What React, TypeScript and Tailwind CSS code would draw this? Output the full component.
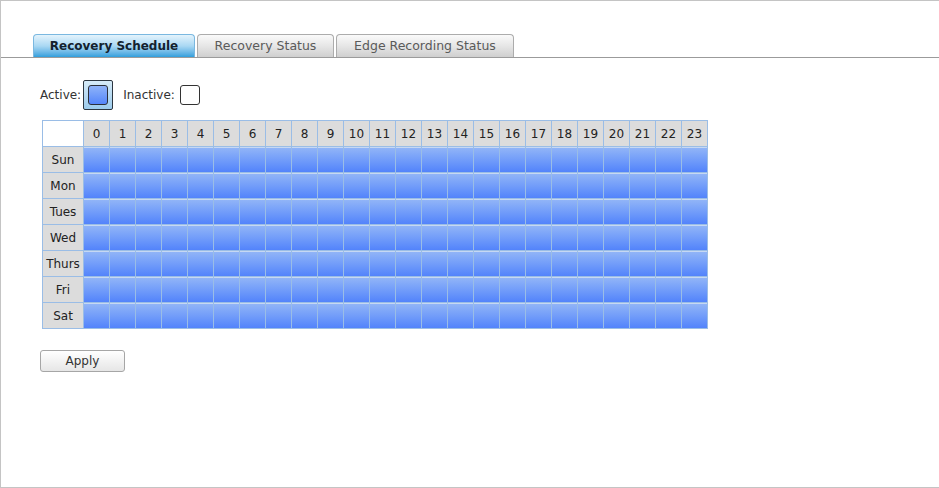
import React from 'react';
import { clsx } from 'clsx';

const hours = Array.from({ length: 24 }, (_, i) => i);
const days = ['Sun', 'Mon', 'Tues', 'Wed', 'Thurs', 'Fri', 'Sat'];

const tabs = [
  { label: 'Recovery Schedule', width: 'w-[162px]', active: true },
  { label: 'Recovery Status', width: 'w-[137px]', active: false },
  { label: 'Edge Recording Status', width: 'w-[178px]', active: false },
];

const App: React.FC = () => {
  return (
    <div className="w-[939px] h-[488px] bg-white border-t border-l border-b border-[#c4c4c4] font-['DejaVu_Sans',Verdana,sans-serif] text-[12px] text-[#333]">
      {/* tab strip */}
      <div className="mt-[33px] flex items-end gap-[2px] pl-[32px] border-b border-[#9b9b9b]">
        {tabs.map((t) => (
          <div
            key={t.label}
            className={clsx(
              'h-[23px] flex items-center justify-center rounded-t-[4px] border border-b-0 leading-none',
              t.width,
              t.active
                ? 'text-[12px] font-bold text-[#14222e] border-[#7ab8e0] bg-gradient-to-b from-[#e4f3fc] via-[#a9d8f3] to-[#2e9fdc]'
                : 'text-[12.5px] text-[#5a5a5a] border-[#acacac] bg-gradient-to-b from-[#fafafa] via-[#e6e6e6] to-[#cfcfcf]'
            )}
          >
            {t.label}
          </div>
        ))}
      </div>

      {/* legend */}
      <div className="mt-[22px] pl-[39px] flex items-center h-[30px]">
        <span>Active:</span>
        <div className="ml-[2px] w-[30px] h-[30px] rounded-[2px] border border-[#2c3640] bg-gradient-to-b from-[#d6ebf8] to-[#9ccbec] flex items-center justify-center">
          <div className="w-[20px] h-[20px] rounded-[3px] border border-[#2a2f3a] bg-gradient-to-b from-[#8fb3f8] to-[#5585fa]" />
        </div>
        <span className="ml-[10px]">Inactive:</span>
        <div className="ml-[5px] w-[20px] h-[20px] rounded-[3px] border border-[#333] bg-white" />
      </div>

      {/* schedule grid */}
      <div className="mt-[10px] ml-[41px] w-fit bg-[#9abde6] p-px grid grid-cols-[40px_repeat(24,25px)] gap-px">
        <div className="h-[25px] bg-white" />
        {hours.map((h) => (
          <div key={h} className="h-[25px] bg-[#dcdcdc] flex items-center justify-center text-[#222]">
            {h}
          </div>
        ))}
        {days.map((d) => (
          <React.Fragment key={d}>
            <div className="h-[25px] bg-[#dcdcdc] flex items-center justify-center text-[#222]">{d}</div>
            {hours.map((h) => (
              <div
                key={h}
                className="h-[25px] border-t border-[#c6d8f3] bg-gradient-to-b from-[#91b4f7] to-[#5383fb]"
              />
            ))}
          </React.Fragment>
        ))}
      </div>

      <button className="mt-[21px] ml-[39px] w-[85px] h-[22px] rounded-[3px] border border-[#a6a6a6] bg-gradient-to-b from-white to-[#e6e6e6] text-[#333] text-[12px] leading-none">
        Apply
      </button>
    </div>
  );
};

export default App;
